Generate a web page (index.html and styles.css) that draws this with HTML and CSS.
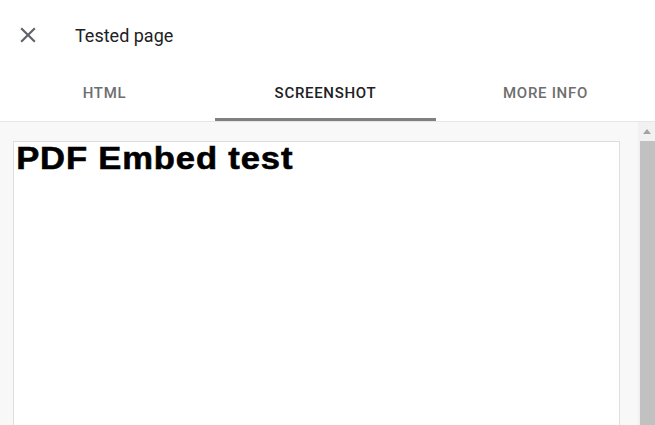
FILE: index.html
```html
<!DOCTYPE html>
<html lang="en">
<head>
    <meta charset="UTF-8">
    <title>Tested page</title>
    <link rel="stylesheet" href="styles.css">
</head>
<body>
    <div class="panel">
        <div class="header">
            <button class="close-btn" aria-label="Close">
                <svg width="24" height="24" viewBox="0 0 24 24"><path d="M19 6.41 17.59 5 12 10.59 6.41 5 5 6.41 10.59 12 5 17.59 6.41 19 12 13.41 17.59 19 19 17.59 13.41 12z" fill="#5f6368"/></svg>
            </button>
            <div class="title">Tested page</div>
        </div>
        <div class="tabs">
            <div class="tab first">HTML</div>
            <div class="tab active">SCREENSHOT</div>
            <div class="tab">MORE INFO</div>
        </div>
        <div class="viewer">
            <div class="frame">
                <div class="page">
                    <h1>PDF Embed test</h1>
                </div>
            </div>
            <div class="scrollbar">
                <div class="arrow"></div>
                <div class="thumb"></div>
            </div>
        </div>
    </div>
</body>
</html>
```

FILE: styles.css
```css
body {
    margin: 0;
    font-family: Roboto, Arial, sans-serif;
    background: #ffffff;
    overflow: hidden;
}
.panel {
    width: 655px;
    height: 425px;
    display: flex;
    flex-direction: column;
    overflow: hidden;
}
.header {
    height: 70px;
    display: flex;
    align-items: center;
    padding-left: 15px;
    box-sizing: border-box;
}
.close-btn {
    width: 26px;
    height: 26px;
    padding: 0;
    border: none;
    background: none;
    display: flex;
    margin-right: 34px;
}
.close-btn svg {
    width: 26px;
    height: 26px;
}
.title {
    font-size: 18px;
    color: #202124;
}
.tabs {
    display: grid;
    grid-template-columns: 215px 221px 1fr;
    height: 51px;
    border-bottom: 1px solid #e6e6e6;
}
.tab {
    display: flex;
    align-items: center;
    justify-content: center;
    font-size: 15px;
    font-weight: 500;
    letter-spacing: 0.7px;
    color: #6e6e6e;
    padding-bottom: 6px;
    box-sizing: border-box;
}
.tab.first {
    padding-right: 6px;
}
.tab.active {
    color: #202124;
    border-bottom: 3px solid #808080;
    padding-bottom: 3px;
}
.viewer {
    flex: 1;
    display: flex;
    background: #f8f8f8;
}
.frame {
    flex: 1;
    padding: 19px 18px 0 13px;
    overflow: hidden;
}
.page {
    background: #ffffff;
    border: 1px solid #dedede;
    border-bottom: none;
    height: 100%;
    box-sizing: border-box;
}
.page h1 {
    display: inline-block;
    margin: 0;
    padding-left: 2px;
    font-family: "Liberation Sans", Arial, sans-serif;
    font-size: 32px;
    font-weight: bold;
    color: #000000;
    line-height: 32px;
    letter-spacing: 0.8px;
    transform: scaleX(1.08);
    transform-origin: left center;
    -webkit-text-stroke: 0.6px #000000;
}
.scrollbar {
    width: 17px;
    background: #f1f1f1;
    display: flex;
    flex-direction: column;
    align-items: center;
}
.arrow {
    width: 0;
    height: 0;
    margin: 7px 0 7px;
    border-left: 4px solid transparent;
    border-right: 4px solid transparent;
    border-bottom: 5px solid #a3a3a3;
}
.thumb {
    width: 15px;
    margin-left: 2px;
    flex: 1;
    background: #c1c1c1;
}
```
